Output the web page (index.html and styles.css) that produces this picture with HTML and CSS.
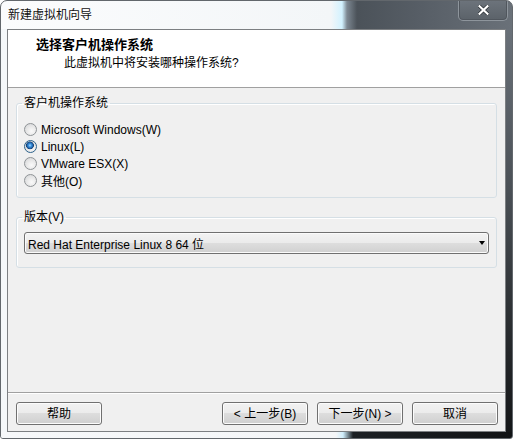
FILE: index.html
```html
<!DOCTYPE html>
<html>
<head>
<meta charset="utf-8">
<link rel="stylesheet" href="styles.css">
</head>
<body>
<div class="win">
  <div class="titlebar">
    <span class="title">新建虚拟机向导</span>
    <div class="close">
      <svg width="11" height="10" viewBox="0 0 11 10"><path d="M1.5 1.2 L9.5 8.8 M9.5 1.2 L1.5 8.8" stroke="#2c3136" stroke-width="3.6" stroke-linecap="square"/><path d="M1.5 1.2 L9.5 8.8 M9.5 1.2 L1.5 8.8" stroke="#ffffff" stroke-width="2.2" stroke-linecap="square"/></svg>
    </div>
  </div>
  <div class="middle">
    <div class="lframe"></div>
    <div class="client">
      <div class="header">
        <div class="h-title">选择客户机操作系统</div>
        <div class="h-sub">此虚拟机中将安装哪种操作系统?</div>
      </div>
      <div class="body">
        <fieldset class="group g1">
          <legend>客户机操作系统</legend>
          <div class="radios">
            <div class="radio"><span class="rb"></span><span>Microsoft Windows(W)</span></div>
            <div class="radio"><span class="rb on"></span><span>Linux(L)</span></div>
            <div class="radio"><span class="rb"></span><span>VMware ESX(X)</span></div>
            <div class="radio"><span class="rb"></span><span>其他(O)</span></div>
          </div>
        </fieldset>
        <fieldset class="group g2">
          <legend>版本(V)</legend>
          <div class="select"><span>Red Hat Enterprise Linux 8 64 位</span><span class="arrow"></span></div>
        </fieldset>
      </div>
      <div class="footer">
        <div class="btn">帮助</div>
        <div class="spacer"></div>
        <div class="btn">&lt; 上一步(B)</div>
        <div class="btn">下一步(N) &gt;</div>
        <div class="btn">取消</div>
      </div>
    </div>
    <div class="rframe"></div>
  </div>
  <div class="bframe"></div>
</div>
</body>
</html>
```
FILE: styles.css
```css
html, body {
  margin: 0;
  padding: 0;
  background: #ffffff;
}
body {
  font-family: "Liberation Sans", "Noto Sans CJK SC", sans-serif;
  font-size: 12px;
  color: #000;
}
.win {
  width: 513px;
  height: 439px;
  box-sizing: border-box;
  border: 1px solid #62676c;
  border-radius: 7px 7px 3px 3px;
  overflow: hidden;
  display: flex;
  flex-direction: column;
  background: linear-gradient(to right, #fbfcfd 0, #f3f6f8 330px, #d2f2ff 341px, #7d8892 346px, #4b5259 356px, #575e66 420px, #6a7179 100%);
}
.titlebar {
  height: 28px;
  display: flex;
  align-items: center;
  padding-left: 7px;
}
.title {
  font-size: 12px;
  line-height: 16px;
  text-shadow: 0 0 6px #fff, 0 0 3px #fff;
  color: #111;
}
.close {
  margin-left: auto;
  margin-right: 4px;
  align-self: flex-start;
  margin-top: -1px;
  width: 50px;
  height: 21px;
  box-sizing: border-box;
  border: 1px solid #8e959c;
  border-top: none;
  border-radius: 0 0 5px 5px;
  background: linear-gradient(#6d747c, #5b6269);
  box-shadow: inset 0 0 0 1px #50565d;
  display: flex;
  align-items: center;
  justify-content: center;
}
.close svg { display: block; }
.middle {
  height: 403px;
  display: flex;
}
.lframe {
  width: 6px;
  background: #f4f7f9;
}
.rframe {
  flex: 1;
  background: linear-gradient(to bottom, #6a7179 0, #4a5056 40%, #24272a 80%, #141618 100%);
}
.client {
  width: 499px;
  box-sizing: border-box;
  border: 1px solid #7c7f82;
  background: #f0f0f0;
  display: flex;
  flex-direction: column;
}
.bframe {
  height: 6px;
  background: linear-gradient(to right, #f6f8fa 0, #f4f6f8 335px, #cfeefc 342px, #1c2024 352px, #111315 100%);
}
.header {
  height: 57px;
  box-sizing: content-box;
  background: #fff;
  border-bottom: 1px solid #a0a0a0;
  padding-top: 0;
}
.h-title {
  font-weight: bold;
  font-size: 13px;
  line-height: 16px;
  padding: 7px 0 0 28px;
}
.h-sub {
  line-height: 16px;
  padding: 2px 0 0 56px;
}
.body {
  flex: 1;
  padding: 7px 8px 0 8px;
}
.group {
  margin: 0;
  border: 1px solid #d5dfe5;
  border-radius: 3px;
  padding: 0 7px 8px 7px;
  min-width: 0;
  box-shadow: inset 1px 1px 0 #fff;
}
.group legend {
  padding: 0 2px;
  margin-left: -2px;
  line-height: 16px;
}
.radios {
  margin-top: 10px;
  display: flex;
  flex-direction: column;
}
.radio {
  height: 17px;
  display: flex;
  align-items: center;
  gap: 3px;
}
.rb {
  width: 13px;
  height: 13px;
  box-sizing: border-box;
  border-radius: 50%;
  border: 1px solid #8f9396;
  background: radial-gradient(circle at 60% 65%, #fafafa 0, #e9e9e9 45%, #cfd1d3 100%);
  margin-right: 1px;
}
.rb.on {
  border-color: #2c628b;
  background: radial-gradient(circle at 45% 40%, #a6dcff 0, #3a93e0 1.5px, #1f5fa6 3px, #16416f 3.6px, rgba(255,255,255,0) 4.2px), radial-gradient(circle at 60% 65%, #fafafa 0, #e9e9e9 45%, #cfd1d3 100%);
}
.g2 {
  margin-top: 11px;
  padding-bottom: 13px;
}
.select {
  margin-top: 7px;
  height: 22px;
  box-sizing: border-box;
  border: 1px solid #707070;
  border-radius: 3px;
  background: linear-gradient(#f3f3f3 0, #ebebeb 50%, #dedede 50%, #d0d0d0 100%);
  box-shadow: inset 0 0 0 1px #fbfbfb;
  display: flex;
  align-items: center;
  justify-content: space-between;
  padding: 0 3px 0 3px;
}
.arrow {
  width: 0;
  height: 0;
  border-left: 3.5px solid transparent;
  border-right: 3.5px solid transparent;
  border-top: 4px solid #000;
}
.footer {
  height: 39px;
  box-sizing: border-box;
  border-top: 1px solid #a0a0a0;
  box-shadow: inset 0 1px 0 #fff;
  padding: 9px 7px 7px 8px;
  display: flex;
  gap: 9px;
}
.spacer { flex: 1; }
.btn {
  width: 86px;
  height: 23px;
  box-sizing: border-box;
  border: 1px solid #707070;
  border-radius: 3px;
  background: linear-gradient(#f2f2f2 0, #ebebeb 50%, #dddddd 50%, #cfcfcf 100%);
  box-shadow: inset 0 0 0 1px #fcfcfc;
  display: flex;
  align-items: center;
  justify-content: center;
  line-height: 16px;
}
```
